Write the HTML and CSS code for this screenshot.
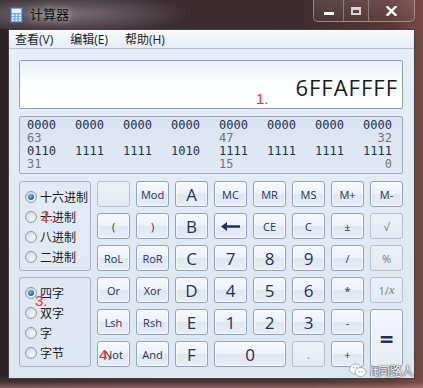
FILE: index.html
```html
<!DOCTYPE html>
<html lang="zh">
  <head>
    <meta charset="UTF-8" />
    <title>计算器</title>
    <link rel="stylesheet" href="styles.css">
  </head>
  <body>
    <div class="window">
      <div class="titlebar">
        <svg class="app-icon" width="13" height="16" viewBox="0 0 13 16">
          <rect x="0.5" y="0.5" width="12" height="15" rx="1" fill="#7fa7cf" stroke="#3d6a98" />
          <rect x="2" y="2" width="9" height="4" fill="#e6f1fb" />
          <g fill="#f2f7fc">
            <rect x="2" y="7.5" width="2" height="1.5" /><rect x="5.5" y="7.5" width="2" height="1.5" /><rect x="9" y="7.5" width="2" height="1.5" />
            <rect x="2" y="10" width="2" height="1.5" /><rect x="5.5" y="10" width="2" height="1.5" /><rect x="9" y="10" width="2" height="1.5" />
            <rect x="2" y="12.5" width="2" height="1.5" /><rect x="5.5" y="12.5" width="2" height="1.5" /><rect x="9" y="12.5" width="2" height="1.5" />
          </g>
        </svg>
        <span class="title">计算器</span>
        <div class="caption">
          <div class="cap-btn cap-min"><span></span></div>
          <div class="cap-btn cap-max"><span></span></div>
          <div class="cap-btn cap-close">
            <svg width="11" height="10" viewBox="0 0 11 10">
              <path d="M1.5 1 L9.5 9 M9.5 1 L1.5 9" stroke="#fff" stroke-width="2.4" stroke-linecap="square" />
            </svg>
          </div>
        </div>
      </div>

      <div class="client">
        <div class="menubar">
          <span>查看(V)</span>
          <span>编辑(E)</span>
          <span>帮助(H)</span>
        </div>

        <div class="content">
          <div class="display">6FFAFFFF</div>

          <div class="bits">
            <div class="bit-row"><span>0000</span><span>0000</span><span>0000</span><span>0000</span><span>0000</span><span>0000</span><span>0000</span><span>0000</span></div>
            <div class="bit-row pos"><span>63</span><span></span><span></span><span></span><span>47</span><span></span><span></span><span>32</span></div>
            <div class="bit-row"><span>0110</span><span>1111</span><span>1111</span><span>1010</span><span>1111</span><span>1111</span><span>1111</span><span>1111</span></div>
            <div class="bit-row pos"><span>31</span><span></span><span></span><span></span><span>15</span><span></span><span></span><span>0</span></div>
          </div>

          <div class="keypad">
            <div class="radio-group group-base">
              <div class="radio checked"><i></i>十六进制</div>
              <div class="radio"><i></i>十进制</div>
              <div class="radio"><i></i>八进制</div>
              <div class="radio"><i></i>二进制</div>
            </div>
            <div class="radio-group group-word">
              <div class="radio checked"><i></i>四字</div>
              <div class="radio"><i></i>双字</div>
              <div class="radio"><i></i>字</div>
              <div class="radio"><i></i>字节</div>
            </div>

            <button class="key off"></button>
            <button class="key">Mod</button>
            <button class="key big">A</button>
            <button class="key">MC</button>
            <button class="key">MR</button>
            <button class="key">MS</button>
            <button class="key">M+</button>
            <button class="key">M-</button>

            <button class="key">(</button>
            <button class="key">)</button>
            <button class="key big">B</button>
            <button class="key">
              <svg width="19" height="9" viewBox="0 0 19 9">
                <path d="M0 4.5 L6 0 L6 3.3 L19 3.3 L19 5.7 L6 5.7 L6 9 Z" fill="#1e3354" />
              </svg>
            </button>
            <button class="key">CE</button>
            <button class="key">C</button>
            <button class="key">±</button>
            <button class="key off">√</button>

            <button class="key">RoL</button>
            <button class="key">RoR</button>
            <button class="key big">C</button>
            <button class="key big">7</button>
            <button class="key big">8</button>
            <button class="key big">9</button>
            <button class="key">/</button>
            <button class="key off">%</button>

            <button class="key">Or</button>
            <button class="key">Xor</button>
            <button class="key big">D</button>
            <button class="key big">4</button>
            <button class="key big">5</button>
            <button class="key big">6</button>
            <button class="key">*</button>
            <button class="key off">1/<i>x</i></button>

            <button class="key">Lsh</button>
            <button class="key">Rsh</button>
            <button class="key big">E</button>
            <button class="key big">1</button>
            <button class="key big">2</button>
            <button class="key big">3</button>
            <button class="key">-</button>
            <button class="key equals">=</button>

            <button class="key">Not</button>
            <button class="key">And</button>
            <button class="key big">F</button>
            <button class="key big zero">0</button>
            <button class="key off">.</button>
            <button class="key">+</button>
          </div>
        </div>
      </div>

      <span class="note note-1">1.</span>
      <span class="note note-2">2.</span>
      <span class="note note-3">3.</span>
      <span class="note note-4">4.</span>

      <div class="watermark">
        <svg width="18" height="15" viewBox="0 0 18 15">
          <ellipse cx="6.5" cy="6" rx="6" ry="5" fill="#fff" stroke="#9a9a9a" stroke-width="0.8" />
          <ellipse cx="11.5" cy="9" rx="5.5" ry="4.5" fill="#fff" stroke="#9a9a9a" stroke-width="0.8" />
          <circle cx="4.5" cy="4.8" r="0.8" fill="#9a9a9a" />
          <circle cx="8" cy="4.8" r="0.8" fill="#9a9a9a" />
          <circle cx="10" cy="8.5" r="0.7" fill="#9a9a9a" />
          <circle cx="13" cy="8.5" r="0.7" fill="#9a9a9a" />
        </svg>
        <span>it同路人</span>
      </div>
    </div>
  </body>
</html>
```

FILE: styles.css
```css
* {
  margin: 0;
  padding: 0;
  box-sizing: border-box;
}

body {
  width: 423px;
  height: 388px;
  overflow: hidden;
  font-family: "Open Sans", "Noto Sans CJK SC", sans-serif;
}

.window {
  position: relative;
  width: 423px;
  height: 388px;
  padding: 0 8px 9px;
  display: flex;
  flex-direction: column;
  background:
    linear-gradient(to top, rgba(200, 150, 140, 0.55) 0, rgba(120, 80, 80, 0.3) 6px, transparent 12px),
    linear-gradient(90deg, #2c2226 0%, #3a2c31 35%, #3d2b2f 70%, #5a3633 92%, #7a4a42 100%);
}

/* title bar */
.titlebar {
  height: 29px;
  margin: 0 -8px;
  padding: 0 0 0 10px;
  display: flex;
  align-items: flex-start;
  position: relative;
  background: radial-gradient(ellipse 130px 22px at 60px 14px, rgba(150, 140, 148, 0.75), transparent);
}

.app-icon {
  margin-top: 7px;
}

.title {
  margin: 6px 0 0 7px;
  font-size: 13px;
  line-height: 16px;
  color: #111;
  text-shadow: 0 0 6px rgba(255, 255, 255, 0.7);
}

.caption {
  margin-left: auto;
  margin-right: 8px;
  height: 22px;
  display: flex;
  border: 1px solid rgba(200, 190, 195, 0.55);
  border-top: none;
  border-radius: 0 0 5px 5px;
  overflow: hidden;
  background: linear-gradient(rgba(255, 255, 255, 0.12), rgba(255, 255, 255, 0.04));
}

.cap-btn {
  height: 100%;
  display: flex;
  align-items: center;
  justify-content: center;
  border-left: 1px solid rgba(200, 190, 195, 0.45);
}

.cap-btn:first-child {
  border-left: none;
}

.cap-min {
  width: 29px;
}

.cap-min span {
  width: 10px;
  height: 3px;
  margin-top: 6px;
  background: #fff;
}

.cap-max {
  width: 25px;
}

.cap-max span {
  width: 10px;
  height: 8px;
  border: 2px solid #d8d4d6;
  border-top-width: 3px;
}

.cap-close {
  width: 46px;
}

/* client area */
.client {
  height: 350px;
  display: flex;
  flex-direction: column;
  border: 1px solid #4a3d42;
  background: linear-gradient(#e8eef8, #dce6f1);
}

.menubar {
  height: 19px;
  display: flex;
  gap: 17px;
  padding-left: 6px;
  font-size: 12px;
  line-height: 19px;
  color: #1b1b1b;
  background: linear-gradient(#f9fbfd, #e3ebf5);
  border-bottom: 1px solid #b6c3d3;
}

.content {
  padding: 11px 11px 0 10px;
}

.display {
  height: 49px;
  padding: 12px 4px 0 0;
  text-align: right;
  font-size: 22px;
  line-height: 28px;
  letter-spacing: 1px;
  color: #1a1a1a;
  border: 1px solid #8ea0b7;
  border-radius: 2px;
  background: linear-gradient(#e9f0f8, #fdfeff 45%, #ffffff);
}

.bits {
  height: 58px;
  margin-top: 7px;
  padding: 2px 10px 0 7px;
  border: 1px solid #99a9be;
  border-radius: 2px;
  background: linear-gradient(#d9e3ef, #e2eaf4);
  font-family: "DejaVu Sans Mono", monospace;
  font-size: 12px;
  line-height: 13px;
  color: #1d3050;
}

.bit-row {
  display: grid;
  grid-template-columns: repeat(7, 48px) 1fr;
}

.bit-row span:last-child {
  text-align: right;
}

.bit-row.pos {
  color: #707478;
}

/* keypad */
.keypad {
  margin-top: 7px;
  display: grid;
  grid-template-columns: 72px repeat(8, 33px);
  grid-template-rows: repeat(6, 26px);
  column-gap: 6px;
  row-gap: 6px;
}

.radio-group {
  grid-column: 1;
  padding: 5px 0 0 5px;
  border: 1px solid #a3b2c6;
  border-radius: 3px;
}

.group-base {
  grid-row: 1 / 4;
}

.group-word {
  grid-row: 4 / 7;
}

.radio {
  height: 20px;
  display: flex;
  align-items: center;
  font-size: 12px;
  color: #1b1b1b;
}

.radio i {
  width: 12px;
  height: 12px;
  margin-right: 3px;
  border-radius: 50%;
  border: 1px solid #8d99a8;
  background: radial-gradient(circle at 60% 65%, #f6f8fa, #c9d1da);
  display: flex;
  align-items: center;
  justify-content: center;
}

.radio.checked i::after {
  content: "";
  width: 6px;
  height: 6px;
  border-radius: 50%;
  background: radial-gradient(circle at 40% 35%, #7cc0e8, #1d5d8e 70%);
}

.key {
  border: 1px solid #93a3b9;
  border-radius: 3px;
  background: linear-gradient(#f6f8fc 0%, #edf2f8 48%, #dfe7f1 52%, #e6edf6 100%);
  box-shadow: inset 0 0 0 1px rgba(255, 255, 255, 0.55);
  font-family: "Open Sans", sans-serif;
  font-size: 11px;
  color: #1e3354;
  display: flex;
  align-items: center;
  justify-content: center;
}

.key.big {
  font-size: 17px;
}

.key.off {
  border-color: #b3c0cf;
  background: linear-gradient(#eaf0f7, #e3eaf3);
  box-shadow: none;
  color: #6f7f94;
}

.key i {
  font-family: "Liberation Serif", serif;
  font-size: 13px;
}

.key.zero {
  grid-column: span 2;
}

.key.equals {
  grid-row: span 2;
  font-size: 24px;
  font-weight: 700;
  background: linear-gradient(#f3f6fa, #e6ecf4);
}

/* red notes drawn over the screenshot */
.note {
  position: absolute;
  color: #e8343a;
  font-family: "Liberation Sans", sans-serif;
  font-size: 15px;
  line-height: 15px;
}

.note-1 {
  left: 256px;
  top: 91px;
}

.note-2 {
  left: 41px;
  top: 208px;
}

.note-3 {
  left: 35px;
  top: 293px;
}

.note-4 {
  left: 99px;
  top: 347px;
}

.watermark {
  position: absolute;
  left: 349px;
  top: 362px;
  display: flex;
  align-items: center;
  gap: 3px;
  font-family: "Noto Sans CJK SC", sans-serif;
  font-size: 12px;
  color: #fff;
  text-shadow: 0 0 2px #333, 0 0 1px #000;
}
```
